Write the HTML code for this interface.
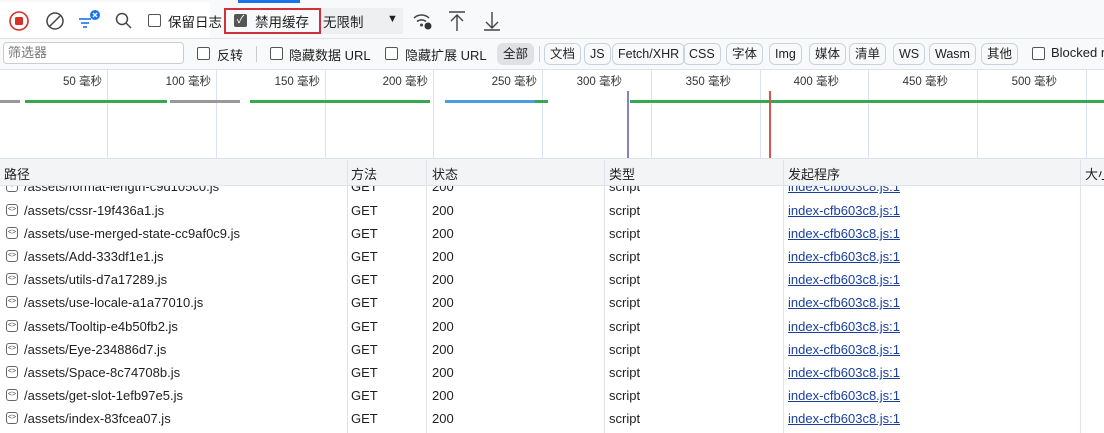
<!DOCTYPE html><html><head><meta charset="utf-8"><style>
*{box-sizing:border-box;margin:0;padding:0}
body{width:1104px;height:433px;overflow:hidden;background:#fff;font-family:"Liberation Sans","Noto Sans CJK SC",sans-serif;font-size:13px;color:#1f1f1f;position:relative}
.a{position:absolute;white-space:nowrap}
.cb{position:absolute;width:13px;height:13px;border:1px solid #555;border-radius:2px;background:#fff}
.chip{position:absolute;top:43px;height:22px;border:1px solid #c8d3e0;border-radius:6px;font-size:12.5px;line-height:20px;padding:0 5px;color:#222;white-space:nowrap}
.tl{position:absolute;top:73px;font-size:11.5px;color:#333;text-align:right;width:80px;white-space:nowrap}
.vl{position:absolute;top:70px;height:88px;width:1px;background:#dbe3ef}
.row{position:absolute;left:0;width:1104px;height:23px;font-size:13px;line-height:23px;white-space:nowrap}
.row span{position:absolute}
.ic{position:absolute;left:6px;top:5px;width:12px;height:12px;border:1px solid #666;border-radius:3px;font-size:7px;line-height:10px;text-align:center;color:#444;font-style:normal}
.lk{color:#1a3fa0;text-decoration:underline}
.col{position:absolute;top:160px;height:273px;width:1px;background:#e0e4ea}
</style></head><body>
<div class="a" style="left:0;top:0;width:1104px;height:39px;background:#f8f9fa;border-bottom:1px solid #e3e3e3"></div>
<div class="a" style="left:238px;top:0;width:62px;height:3px;background:#1a73e8"></div>
<div class="a" style="left:0;top:2px;width:210px;height:36px;background:#fff"></div>
<svg class="a" style="left:8px;top:10px" width="22" height="22"><circle cx="11" cy="11" r="9" fill="none" stroke="#d93025" stroke-width="1.6"/><rect x="7" y="7" width="8" height="8" rx="1.5" fill="#d93025"/></svg>
<svg class="a" style="left:44px;top:10px" width="22" height="22"><circle cx="11" cy="11" r="8" fill="none" stroke="#444" stroke-width="1.5"/><line x1="5.5" y1="16.5" x2="16.5" y2="5.5" stroke="#444" stroke-width="1.5"/></svg>
<svg class="a" style="left:76px;top:8px" width="26" height="24"><g stroke="#1a73e8" stroke-width="1.6"><line x1="3" y1="11" x2="15" y2="11"/><line x1="5" y1="15" x2="13" y2="15"/><line x1="7" y1="19" x2="11" y2="19"/></g><circle cx="19" cy="7" r="5" fill="#1a73e8"/><path d="M17 5l4 4M21 5l-4 4" stroke="#fff" stroke-width="1.3"/></svg>
<svg class="a" style="left:114px;top:11px" width="20" height="20"><circle cx="8" cy="8" r="5.5" fill="none" stroke="#444" stroke-width="1.5"/><line x1="12" y1="12" x2="17" y2="17" stroke="#444" stroke-width="1.5"/></svg>
<div class="cb" style="left:148px;top:14px"></div>
<div class="a" style="left:168px;top:11px;font-size:13.5px">保留日志</div>
<div class="a" style="left:224px;top:8px;width:97px;height:26px;border:2px solid #d0303a"></div>
<div class="a" style="left:234px;top:14px;width:13px;height:13px;background:#555;border-radius:2px;color:#fff;font-size:11px;line-height:13px;text-align:center">✓</div>
<div class="a" style="left:255px;top:11px;font-size:13.5px">禁用缓存</div>
<div class="a" style="left:321px;top:8px;width:82px;height:26px;background:#eeeff1"></div>
<div class="a" style="left:323px;top:11px;font-size:13.5px">无限制</div>
<div class="a" style="left:387px;top:13px;font-size:11px">▼</div>
<svg class="a" style="left:411px;top:10px" width="24" height="22"><g fill="none" stroke="#444" stroke-width="1.5"><path d="M3 8a11 11 0 0 1 15 0"/><path d="M6 11.5a7 7 0 0 1 9 0"/></g><circle cx="10.5" cy="15" r="1.5" fill="#444"/><circle cx="17" cy="16" r="3.5" fill="#333"/></svg>
<svg class="a" style="left:447px;top:10px" width="20" height="22"><path d="M2 2h16M10 5v16M4 11l6-6 6 6" fill="none" stroke="#444" stroke-width="1.4"/></svg>
<svg class="a" style="left:482px;top:10px" width="20" height="22"><path d="M2 20h16M10 2v16M4 12l6 6 6-6" fill="none" stroke="#444" stroke-width="1.4"/></svg>

<div class="a" style="left:0;top:39px;width:1104px;height:31px;background:#f8f9fa;border-bottom:1px solid #dde3ec"></div>
<div class="a" style="left:3px;top:42px;width:181px;height:22px;border:1px solid #ccc;border-radius:4px;background:#fff;color:#777;font-size:13px;line-height:20px;padding-left:4px">筛选器</div>
<div class="cb" style="left:197px;top:47px"></div><div class="a" style="left:217px;top:45px">反转</div>
<div class="a" style="left:256px;top:46px;width:1px;height:16px;background:#ccc"></div>
<div class="cb" style="left:270px;top:47px"></div><div class="a" style="left:289px;top:45px">隐藏数据 URL</div>
<div class="cb" style="left:385px;top:47px"></div><div class="a" style="left:405px;top:45px">隐藏扩展 URL</div>
<div class="a" style="left:497px;top:43px;width:37px;height:22px;background:#dfe1e5;border-radius:6px;line-height:22px;text-align:center;font-size:12.5px">全部</div>
<div class="a" style="left:539px;top:46px;width:1px;height:16px;background:#ccc"></div>
<div class="chip" style="left:544px">文档</div>
<div class="chip" style="left:584px">JS</div>
<div class="chip" style="left:612px">Fetch/XHR</div>
<div class="chip" style="left:683px">CSS</div>
<div class="chip" style="left:726px">字体</div>
<div class="chip" style="left:769px">Img</div>
<div class="chip" style="left:809px">媒体</div>
<div class="chip" style="left:849px">清单</div>
<div class="chip" style="left:893px">WS</div>
<div class="chip" style="left:929px">Wasm</div>
<div class="chip" style="left:981px">其他</div>
<div class="cb" style="left:1032px;top:47px"></div><div class="a" style="left:1051px;top:45px">Blocked r</div>

<div class="vl" style="left:107px"></div><div class="vl" style="left:216px"></div><div class="vl" style="left:325px"></div><div class="vl" style="left:433px"></div><div class="vl" style="left:542px"></div><div class="vl" style="left:651px"></div><div class="vl" style="left:760px"></div><div class="vl" style="left:868px"></div><div class="vl" style="left:977px"></div><div class="vl" style="left:1086px"></div>
<div class="tl" style="left:22px">50 毫秒</div><div class="tl" style="left:131px">100 毫秒</div><div class="tl" style="left:240px">150 毫秒</div><div class="tl" style="left:348px">200 毫秒</div><div class="tl" style="left:457px">250 毫秒</div><div class="tl" style="left:542px">300 毫秒</div><div class="tl" style="left:651px">350 毫秒</div><div class="tl" style="left:759px">400 毫秒</div><div class="tl" style="left:868px">450 毫秒</div><div class="tl" style="left:977px">500 毫秒</div>
<div class="a" style="left:0;top:100px;width:20px;height:3px;background:#999"></div>
<div class="a" style="left:25px;top:100px;width:142px;height:3px;background:#34a853"></div>
<div class="a" style="left:170px;top:100px;width:70px;height:3px;background:#999"></div>
<div class="a" style="left:250px;top:100px;width:180px;height:3px;background:#34a853"></div>
<div class="a" style="left:445px;top:100px;width:90px;height:3px;background:#4a9ee0"></div>
<div class="a" style="left:535px;top:100px;width:13px;height:3px;background:#34a853"></div>
<div class="a" style="left:627px;top:91px;width:2px;height:67px;background:#8a7fbf"></div>
<div class="a" style="left:630px;top:100px;width:474px;height:3px;background:#34a853"></div>
<div class="a" style="left:769px;top:91px;width:2px;height:67px;background:#d9534f"></div>

<div class="a" style="left:0;top:158px;width:1104px;height:28px;background:#f3f4f6;border-top:1px solid #dde3ec;border-bottom:1px solid #dde3ec"></div>
<div class="a" style="left:4px;top:164px">路径</div><div class="a" style="left:351px;top:164px">方法</div><div class="a" style="left:432px;top:164px">状态</div><div class="a" style="left:609px;top:164px">类型</div><div class="a" style="left:788px;top:164px">发起程序</div><div class="a" style="left:1085px;top:164px">大小</div>
<div class="col" style="left:347px"></div><div class="col" style="left:426px"></div><div class="col" style="left:604px"></div><div class="col" style="left:783px"></div><div class="col" style="left:1080px"></div>

<div style="position:absolute;top:186px;left:0;width:1104px;height:247px;overflow:hidden">
<div class="row" style="top:-11px"><i class="ic">&lt;&gt;</i><span style="left:24px">/assets/format-length-c9d105c0.js</span><span style="left:351px">GET</span><span style="left:432px">200</span><span style="left:609px">script</span><span class="lk" style="left:788px">index-cfb603c8.js:1</span></div>
<div class="row" style="top:13px"><i class="ic">&lt;&gt;</i><span style="left:24px">/assets/cssr-19f436a1.js</span><span style="left:351px">GET</span><span style="left:432px">200</span><span style="left:609px">script</span><span class="lk" style="left:788px">index-cfb603c8.js:1</span></div>
<div class="row" style="top:36px"><i class="ic">&lt;&gt;</i><span style="left:24px">/assets/use-merged-state-cc9af0c9.js</span><span style="left:351px">GET</span><span style="left:432px">200</span><span style="left:609px">script</span><span class="lk" style="left:788px">index-cfb603c8.js:1</span></div>
<div class="row" style="top:59px"><i class="ic">&lt;&gt;</i><span style="left:24px">/assets/Add-333df1e1.js</span><span style="left:351px">GET</span><span style="left:432px">200</span><span style="left:609px">script</span><span class="lk" style="left:788px">index-cfb603c8.js:1</span></div>
<div class="row" style="top:82px"><i class="ic">&lt;&gt;</i><span style="left:24px">/assets/utils-d7a17289.js</span><span style="left:351px">GET</span><span style="left:432px">200</span><span style="left:609px">script</span><span class="lk" style="left:788px">index-cfb603c8.js:1</span></div>
<div class="row" style="top:105px"><i class="ic">&lt;&gt;</i><span style="left:24px">/assets/use-locale-a1a77010.js</span><span style="left:351px">GET</span><span style="left:432px">200</span><span style="left:609px">script</span><span class="lk" style="left:788px">index-cfb603c8.js:1</span></div>
<div class="row" style="top:129px"><i class="ic">&lt;&gt;</i><span style="left:24px">/assets/Tooltip-e4b50fb2.js</span><span style="left:351px">GET</span><span style="left:432px">200</span><span style="left:609px">script</span><span class="lk" style="left:788px">index-cfb603c8.js:1</span></div>
<div class="row" style="top:152px"><i class="ic">&lt;&gt;</i><span style="left:24px">/assets/Eye-234886d7.js</span><span style="left:351px">GET</span><span style="left:432px">200</span><span style="left:609px">script</span><span class="lk" style="left:788px">index-cfb603c8.js:1</span></div>
<div class="row" style="top:175px"><i class="ic">&lt;&gt;</i><span style="left:24px">/assets/Space-8c74708b.js</span><span style="left:351px">GET</span><span style="left:432px">200</span><span style="left:609px">script</span><span class="lk" style="left:788px">index-cfb603c8.js:1</span></div>
<div class="row" style="top:198px"><i class="ic">&lt;&gt;</i><span style="left:24px">/assets/get-slot-1efb97e5.js</span><span style="left:351px">GET</span><span style="left:432px">200</span><span style="left:609px">script</span><span class="lk" style="left:788px">index-cfb603c8.js:1</span></div>
<div class="row" style="top:221px"><i class="ic">&lt;&gt;</i><span style="left:24px">/assets/index-83fcea07.js</span><span style="left:351px">GET</span><span style="left:432px">200</span><span style="left:609px">script</span><span class="lk" style="left:788px">index-cfb603c8.js:1</span></div>
</div>
</body></html>
